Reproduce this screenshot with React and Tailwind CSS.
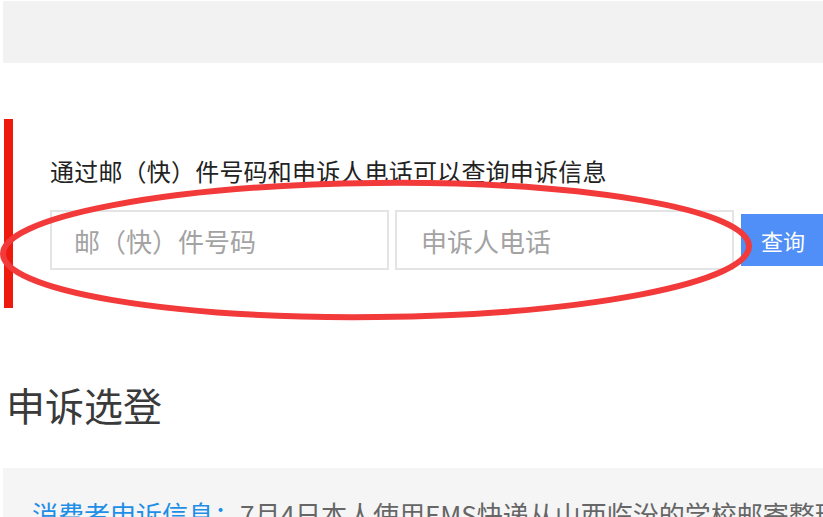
export default function App() {
  return (
    <div className="relative w-full h-[517px] overflow-hidden bg-white pl-[3px] pt-[1px] font-['Noto_Sans_CJK_SC','Noto_Sans',sans-serif]">
      <div className="h-[62px] bg-[#f2f2f2]" />
      <div className="mt-[56px] ml-[1px] h-[189px] border-l-[9px] border-[#ee1a0e] pl-[37px] pt-[35px]">
        <p className="text-[24px] leading-[34px] tracking-[0.2px] text-[#222] whitespace-nowrap">通过邮（快）件号码和申诉人电话可以查询申诉信息</p>
        <div className="mt-[22px] flex items-center">
          <input
            className="shrink-0 w-[339px] h-[60px] border-2 border-[#e4e4e4] pl-[22px] text-[26px] outline-none placeholder:text-[#a3a3a3]"
            placeholder="邮（快）件号码"
          />
          <input
            className="shrink-0 ml-[6px] w-[339px] h-[60px] border-2 border-[#e4e4e4] pl-[24px] text-[26px] outline-none placeholder:text-[#a3a3a3]"
            placeholder="申诉人电话"
          />
          <button className="shrink-0 ml-[7px] h-[52px] w-[90px] bg-[#4f8ff7] text-white text-[22px] pl-[20px] text-left">查询</button>
        </div>
      </div>
      <h2 className="mt-[70px] ml-[3px] text-[39px] leading-[53px] text-[#3a3a3a] whitespace-nowrap">申诉选登</h2>
      <div className="mt-[37px] bg-[#f5f5f5] h-[100px] pl-[29px] pt-[28px]">
        <p className="text-[26px] leading-[36px] whitespace-nowrap">
          <span className="text-[#1e8ee6]">消费者申诉信息：</span>
          <span className="text-[#666]">7月4日本人使用EMS快递从山西临汾的学校邮寄整理好的行李回家</span>
        </p>
      </div>
      <svg className="absolute left-0 top-0 pointer-events-none" width="823" height="517" viewBox="0 0 823 517">
        <ellipse cx="376" cy="250" rx="373" ry="67" fill="none" stroke="#f23a3a" strokeWidth="6" transform="rotate(-0.6 376 250)" />
      </svg>
    </div>
  );
}
